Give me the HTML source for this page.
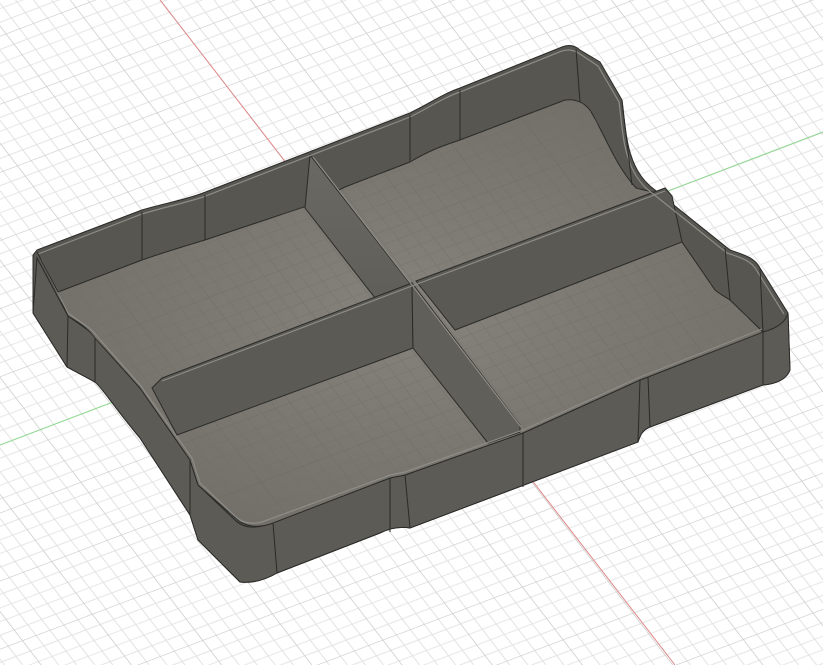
<!DOCTYPE html>
<html><head><meta charset="utf-8"><style>html,body{margin:0;padding:0;background:#fff;overflow:hidden}svg{display:block}</style></head><body>
<svg width="823" height="665" viewBox="0 0 823 665" xmlns="http://www.w3.org/2000/svg">
<defs>
<pattern id="g" width="10" height="10" patternUnits="userSpaceOnUse" patternTransform="matrix(6.98,-2.65,4.06,5.27,388.7,297)">
<path d="M0 2H10M0 4H10M0 6H10M0 8H10M2 0V10M4 0V10M6 0V10M8 0V10" stroke="#e2e2e2" stroke-width="0.14" fill="none"/>
<path d="M0 0H10M0 0V10" stroke="#c8c8c8" stroke-width="0.2" fill="none"/>
</pattern>
<pattern id="g2" width="10" height="10" patternUnits="userSpaceOnUse" patternTransform="matrix(6.98,-2.65,4.06,5.27,388.7,297)">
<path d="M0 2H10M0 4H10M0 6H10M0 8H10M2 0V10M4 0V10M6 0V10M8 0V10" stroke="#6f6d66" stroke-width="0.12" fill="none"/>
<path d="M0 0H10M0 0V10" stroke="#66645e" stroke-width="0.18" fill="none"/>
</pattern>
<radialGradient id="fl" cx="0.5" cy="0.5" r="0.6"><stop offset="0" stop-color="#85837b"/><stop offset="1" stop-color="#706e67"/></radialGradient>
<linearGradient id="dv" x1="0" y1="0" x2="0" y2="1"><stop offset="0" stop-color="#6a6963"/><stop offset="1" stop-color="#55544f"/></linearGradient>
</defs>
<rect width="823" height="665" fill="#fff"/>
<rect width="823" height="665" fill="url(#g)"/>
<line x1="160" y1="0" x2="675" y2="665" stroke="#e08888" stroke-width="1"/>
<line x1="0" y1="445" x2="823" y2="132" stroke="#8fd88f" stroke-width="1"/>
<path d="M37,250 L142,210 C165,203 185,200 203,193 L410,113 C430,103 445,93 460,88 L562,47 Q572,43 580,50 L600,62 L622,100 C626,130 626,165 650,186 L730,250 C745,255 755,258 760,268 L788,313 L790,370 Q785,383 763,385 L650,427 C642,430 640,436 638,442 L410,528 C398,526 388,529 380,533 L277,573 Q258,584 240,582 L198,540 L190,515 L140,438 C115,408 100,385 95,382 L67,367 L33,313 L33,255 Z" fill="#575650" stroke="#2a2a28" stroke-width="1"/>
<path d="M37,258 L68,316 C80,325 90,330 95,338 L140,388 L190,460 L198,485 L235,520 Q245,530 262,526 L390,478 L405,475 L523,433 L640,380 L648,377 L763,332 Q785,326 788,313 L790,370 Q785,383 763,385 L650,427 C642,430 640,436 638,442 L410,528 C398,526 388,529 380,533 L277,573 Q258,584 240,582 L198,540 L190,515 L140,438 C115,408 100,385 95,382 L67,367 L33,313 Z" fill="#5c5b56" stroke="#2a2a28" stroke-width="1"/>
<path d="M58,292 L142,260 C165,252 185,246 205,240 L310,205 L345,187 L410,162 C430,150 445,145 460,140 L565,100 Q580,98 590,110 C605,135 615,165 636,188 L665,195 L682,242 L715,290 C722,296 728,298 730,300 L763,332 L648,377 L640,380 L523,433 L405,475 L390,478 L273,523 Q255,530 240,522 L198,485 L190,460 L140,388 L95,338 C88,328 78,322 68,316 Z" fill="url(#fl)" stroke="#2a2a28" stroke-width="1"/>
<path d="M58,292 L142,260 C165,252 185,246 205,240 L310,205 L345,187 L410,162 C430,150 445,145 460,140 L565,100 Q580,98 590,110 C605,135 615,165 636,188 L665,195 L682,242 L715,290 C722,296 728,298 730,300 L763,332 L648,377 L640,380 L523,433 L405,475 L390,478 L273,523 Q255,530 240,522 L198,485 L190,460 L140,388 L95,338 C88,328 78,322 68,316 Z" fill="url(#g2)" opacity="0.45"/>
<path d="M310,155 L520,425 L520,432 L488,443 L305,208 Z" fill="url(#dv)" stroke="#2a2a28" stroke-width="1"/>
<path d="M152,388 L162,378 L412,283 L413,348 L177,435 Z" fill="#5b5a55" stroke="#2a2a28" stroke-width="1"/>
<path d="M412,283 L520,425 L520,432 L488,443 L413,348 Z" fill="#605f59" stroke="#2a2a28" stroke-width="1"/>
<path d="M416,281 L665,188 L672,196 L682,242 L455,330 Z" fill="#5a5954" stroke="#2a2a28" stroke-width="1"/>
<g fill="none" stroke="#8d8c86" stroke-width="1.2">
<path d="M38,254 L142,214 C165,207 185,203 203,197 L410,117 C430,107 445,97 460,92 L562,51 Q572,48 580,54 L598,66 L619,102 C623,132 623,167 647,189 L727,253 C742,258 752,261 757,271 L784,314"/>
<path d="M41,259 L68,313 C80,322 90,327 96,335 L141,386 L192,458 L200,483 L236,517 Q246,526 262,522 L390,475 L405,472 L523,430 L640,377 L648,374 L762,329"/>
<path d="M162,381 L412,286 L665,191"/>
<path d="M313,157 L412,285 L521,427"/>
</g>
<g stroke="#2a2a28" stroke-width="1">
<line x1="68" y1="316" x2="67" y2="367"/><line x1="95" y1="338" x2="95" y2="382"/>
<line x1="190" y1="460" x2="190" y2="515"/><line x1="273" y1="523" x2="277" y2="573"/>
<line x1="390" y1="478" x2="390" y2="532"/><line x1="405" y1="475" x2="410" y2="528"/>
<line x1="523" y1="433" x2="523" y2="487"/><line x1="640" y1="380" x2="638" y2="442"/>
<line x1="648" y1="377" x2="650" y2="427"/><line x1="763" y1="332" x2="763" y2="385"/>
<line x1="142" y1="212" x2="142" y2="260"/><line x1="205" y1="195" x2="205" y2="240"/>
<line x1="410" y1="115" x2="410" y2="162"/><line x1="460" y1="90" x2="460" y2="140"/>
<line x1="576" y1="49" x2="580" y2="102"/><line x1="622" y1="101" x2="632" y2="185"/>
<line x1="725" y1="248" x2="730" y2="300"/><line x1="760" y1="268" x2="763" y2="332"/>
<line x1="37" y1="252" x2="58" y2="292"/>
</g>
</svg>
</body></html>
